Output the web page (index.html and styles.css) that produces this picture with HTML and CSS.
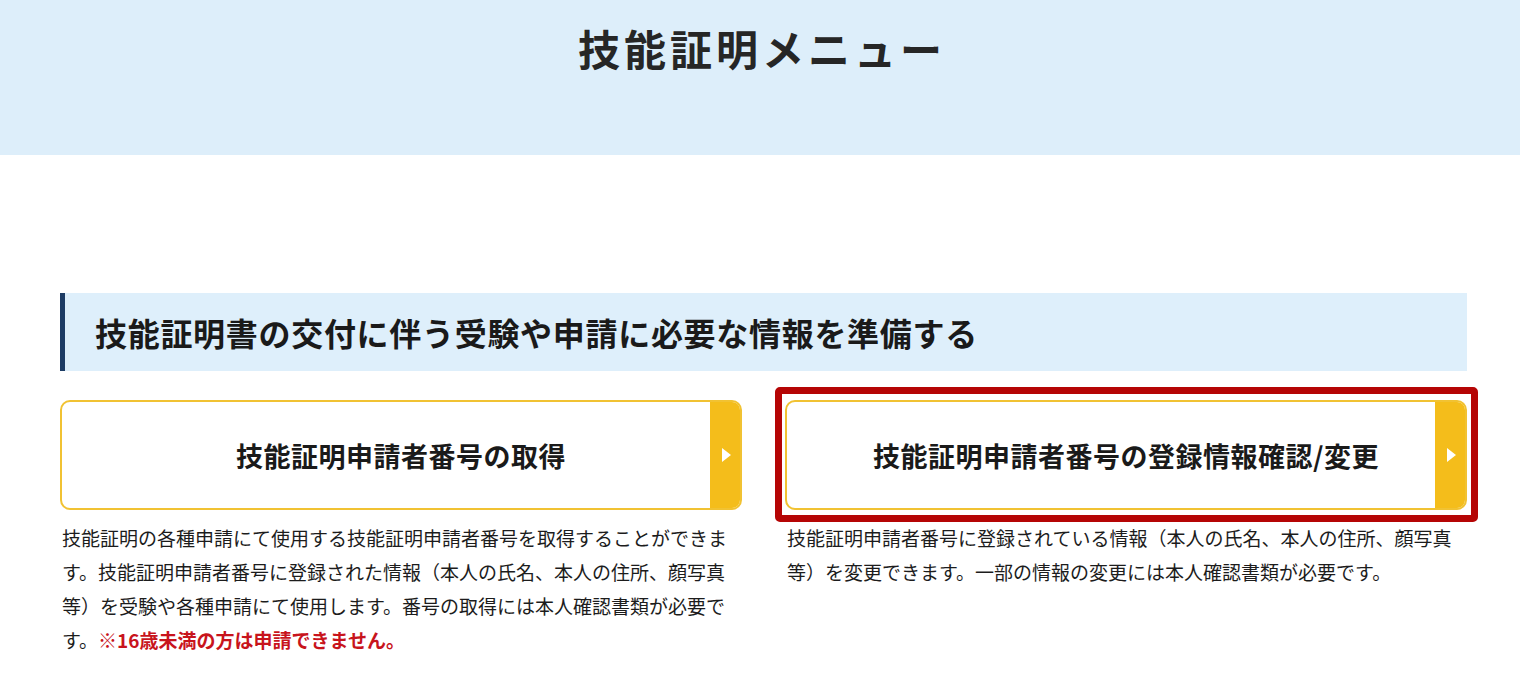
FILE: index.html
```html
<!DOCTYPE html>
<html lang="ja">
<head>
<meta charset="utf-8">
<title>技能証明メニュー</title>
<link rel="stylesheet" href="styles.css">
</head>
<body>
<header class="page-header">
  <h1 class="page-title">技能証明メニュー</h1>
</header>
<main class="content">
  <section class="section">
    <h2 class="section-heading">技能証明書の交付に伴う受験や申請に必要な情報を準備する</h2>
    <div class="menu-grid">
      <div class="menu-item">
        <a class="menu-button" href="#">
          <span class="menu-label">技能証明申請者番号の取得</span>
          <span class="menu-arrow"><span class="tri"></span></span>
        </a>
        <p class="menu-desc">技能証明の各種申請にて使用する技能証明申請者番号を取得することができます。技能証明申請者番号に登録された情報（本人の氏名、本人の住所、顔写真等）を受験や各種申請にて使用します。番号の取得には本人確認書類が必要です。<strong class="warn">※16歳未満の方は申請できません。</strong></p>
      </div>
      <div class="menu-item">
        <div class="highlight-wrap">
          <a class="menu-button" href="#">
            <span class="menu-label">技能証明申請者番号の登録情報確認/変更</span>
            <span class="menu-arrow"><span class="tri"></span></span>
          </a>
          <span class="highlight-frame"></span>
        </div>
        <p class="menu-desc">技能証明申請者番号に登録されている情報（本人の氏名、本人の住所、顔写真等）を変更できます。一部の情報の変更には本人確認書類が必要です。</p>
      </div>
    </div>
  </section>
</main>
</body>
</html>
```

FILE: styles.css
```css
* {
  box-sizing: border-box;
}

body {
  margin: 0;
  font-family: "Noto Sans CJK JP", "Noto Sans", sans-serif;
  color: #1c1c1c;
  background: #ffffff;
}

.page-header {
  height: 155px;
  background: #ddeefa;
  padding-top: 27px;
}

.page-title {
  margin: 0;
  padding-left: 4px;
  text-align: center;
  font-size: 42px;
  line-height: 42px;
  font-weight: 700;
  letter-spacing: 4px;
  color: #262626;
}

.content {
  width: 1407px;
  margin-left: 60px;
  padding-top: 138px;
}

.section-heading {
  margin: 0;
  height: 78px;
  display: flex;
  align-items: center;
  padding-left: 30px;
  background: #deeffb;
  border-left: 5px solid #1d3c64;
  font-size: 32px;
  font-weight: 700;
  letter-spacing: 0.7px;
  color: #1a1a1a;
}

.menu-grid {
  display: grid;
  grid-template-columns: 682px 682px;
  column-gap: 43px;
  margin-top: 29px;
}

.highlight-wrap {
  position: relative;
}

.highlight-frame {
  position: absolute;
  top: -13px;
  left: -10px;
  right: -11px;
  bottom: -12px;
  border: 7px solid #b50505;
  border-radius: 5px;
  pointer-events: none;
}

.menu-button {
  display: flex;
  height: 110px;
  border: 2.5px solid #f1c232;
  border-radius: 10px;
  background: #ffffff;
  overflow: hidden;
  text-decoration: none;
  color: #1a1a1a;
}

.menu-label {
  flex: 1;
  display: flex;
  align-items: center;
  justify-content: center;
  padding-left: 30px;
  font-size: 27px;
  font-weight: 700;
  letter-spacing: 0.5px;
}

.menu-arrow {
  width: 30px;
  background: #f4bd1b;
  display: flex;
  align-items: center;
  justify-content: center;
}

.tri {
  width: 0;
  height: 0;
  border-top: 7px solid transparent;
  border-bottom: 7px solid transparent;
  border-left: 9px solid #ffffff;
  margin-left: 2px;
}

.menu-desc {
  margin: 11px 0 0 2px;
  font-size: 19px;
  line-height: 34px;
  color: #1c1c1c;
}

.warn {
  color: #c8141c;
  font-weight: 700;
}
```
